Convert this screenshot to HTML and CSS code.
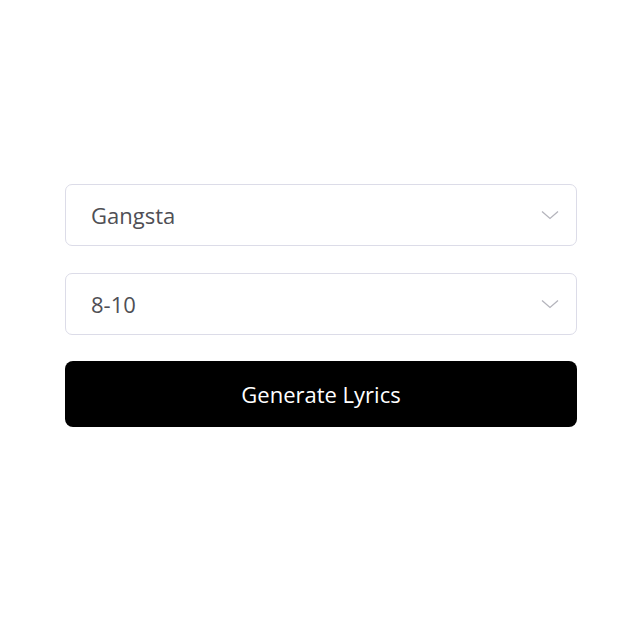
FILE: index.html
```html
<!DOCTYPE html>
<html lang="en">
<head>
    <meta charset="UTF-8">
    <meta name="viewport" content="width=device-width, initial-scale=1.0">
    <title>Lyrics Generator</title>
    <link rel="stylesheet" href="styles.css">
</head>
<body>

    <!-- Lyrics form -->
    <form class="lyrics-form" id="lyricsForm">
        <div class="select-wrap">
            <select id="genre" class="field" aria-label="Genre">
                <option>Gangsta</option>
                <option>Pop</option>
                <option>Rock</option>
            </select>
            <svg class="chevron" width="18" height="10" viewBox="0 0 18 10" aria-hidden="true">
                <path d="M1 1.5 L9 8.5 L17 1.5" fill="none" stroke="#b4b4bc" stroke-width="1.3"/>
            </svg>
        </div>

        <div class="select-wrap">
            <select id="lines" class="field" aria-label="Number of lines">
                <option>8-10</option>
                <option>10-12</option>
                <option>12-16</option>
            </select>
            <svg class="chevron" width="18" height="10" viewBox="0 0 18 10" aria-hidden="true">
                <path d="M1 1.5 L9 8.5 L17 1.5" fill="none" stroke="#b4b4bc" stroke-width="1.3"/>
            </svg>
        </div>

        <button type="submit" class="generate">Generate Lyrics</button>
    </form>

</body>
</html>
```

FILE: styles.css
```css
body {
    margin: 0;
    font-family: "Open Sans", Arial, sans-serif;
    background-color: #fff;
}
.lyrics-form {
    width: 512px;
    margin: 0 0 0 65px;
    padding-top: 184px;
    display: flex;
    flex-direction: column;
}
.select-wrap {
    position: relative;
    margin-bottom: 27px;
}
.select-wrap + .select-wrap {
    margin-bottom: 26px;
}
.field {
    -webkit-appearance: none;
    appearance: none;
    width: 100%;
    height: 62px;
    box-sizing: border-box;
    padding: 0 50px 0 25px;
    border: 1.5px solid #dcdce8;
    border-radius: 7px;
    background: #fff;
    font-family: inherit;
    font-size: 22px;
    color: #4f4f55;
    outline: none;
}
.chevron {
    position: absolute;
    right: 18px;
    top: 26px;
    pointer-events: none;
}
/* Submit button */
.generate {
    height: 66px;
    border: none;
    border-radius: 8px;
    background: #000;
    color: #fff;
    font-family: inherit;
    font-size: 22px;
    cursor: pointer;
}
```
